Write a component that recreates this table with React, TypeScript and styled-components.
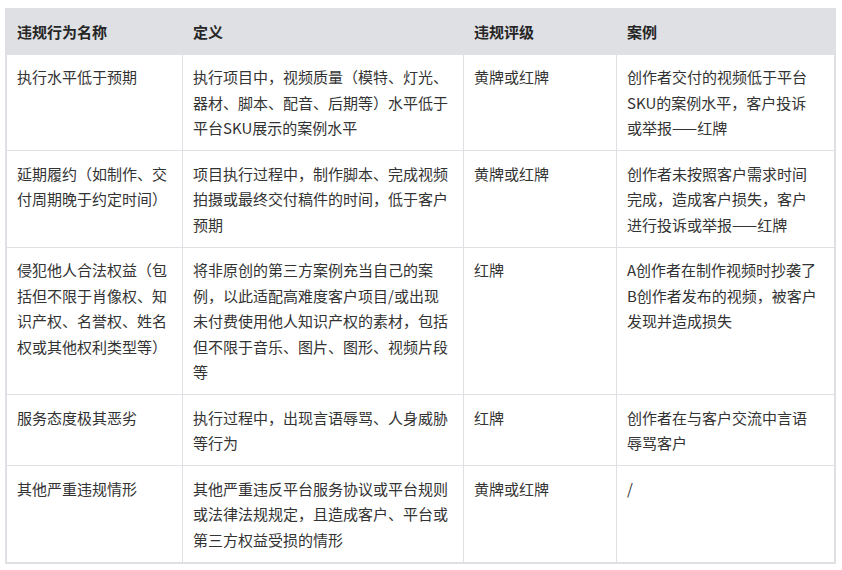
import React from "react";
import styled, { createGlobalStyle } from "styled-components";

const GlobalStyle = createGlobalStyle`
  html, body { margin: 0; padding: 0; background: #ffffff; }
  body {
    padding: 8px 0 0 5px;
    font-family: "Noto Sans CJK SC", "Noto Sans", sans-serif;
  }
`;

const Table = styled.div`
  width: 831px;
  box-sizing: border-box;
  display: grid;
  grid-template-columns: 175px 280px 152px 1fr;
  gap: 1px;
  background: #dfe0e4;
  border: 2px solid #dfe0e4;
`;

const HeadCell = styled.div`
  background: #dfe0e4;
  padding: 9px 10px;
  font-size: 15px;
  line-height: 25.5px;
  font-weight: 700;
  color: #262626;
`;

const Cell = styled.div<{ $padRight?: number }>`
  background: #ffffff;
  padding: 9.5px ${(p) => p.$padRight ?? 10}px 9.5px 10px;
  font-size: 15px;
  line-height: 25.5px;
  color: #333333;
  word-break: normal;
`;

const headers = ["违规行为名称", "定义", "违规评级", "案例"];

const rows: string[][] = [
  [
    "执行水平低于预期",
    "执行项目中，视频质量（模特、灯光、器材、脚本、配音、后期等）水平低于平台SKU展示的案例水平",
    "黄牌或红牌",
    "创作者交付的视频低于平台SKU的案例水平，客户投诉或举报——红牌",
  ],
  [
    "延期履约（如制作、交付周期晚于约定时间）",
    "项目执行过程中，制作脚本、完成视频拍摄或最终交付稿件的时间，低于客户预期",
    "黄牌或红牌",
    "创作者未按照客户需求时间完成，造成客户损失，客户进行投诉或举报——红牌",
  ],
  [
    "侵犯他人合法权益（包括但不限于肖像权、知识产权、名誉权、姓名权或其他权利类型等）",
    "将非原创的第三方案例充当自己的案例，以此适配高难度客户项目/或出现未付费使用他人知识产权的素材，包括但不限于音乐、图片、图形、视频片段等",
    "红牌",
    "A创作者在制作视频时抄袭了B创作者发布的视频，被客户发现并造成损失",
  ],
  [
    "服务态度极其恶劣",
    "执行过程中，出现言语辱骂、人身威胁等行为",
    "红牌",
    "创作者在与客户交流中言语辱骂客户",
  ],
  [
    "其他严重违规情形",
    "其他严重违反平台服务协议或平台规则或法律法规规定，且造成客户、平台或第三方权益受损的情形",
    "黄牌或红牌",
    "/",
  ],
];

export default function App() {
  return (
    <>
      <GlobalStyle />
      <Table>
        {headers.map((h) => (
          <HeadCell key={h}>{h}</HeadCell>
        ))}
        {rows.map((r, i) =>
          r.map((c, j) => (
            <Cell key={`${i}-${j}`} $padRight={j === 3 ? 15 : 10}>
              {c}
            </Cell>
          ))
        )}
      </Table>
    </>
  );
}
